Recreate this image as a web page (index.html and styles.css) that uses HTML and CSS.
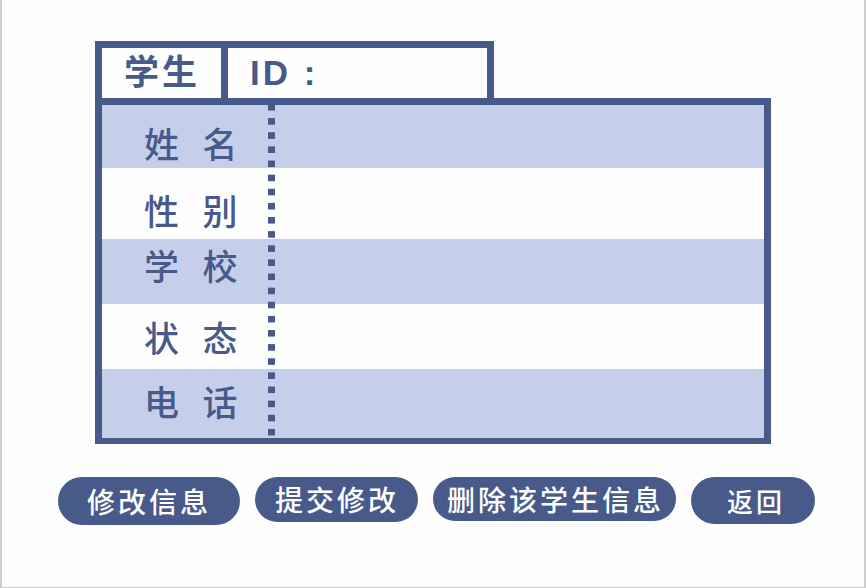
FILE: index.html
```html
<!DOCTYPE html>
<html lang="zh-CN">
<head>
<meta charset="utf-8">
<meta name="viewport" content="width=device-width, initial-scale=1">
<title>学生</title>
<link rel="stylesheet" href="styles.css">
</head>
<body>
<form class="page">
  <main class="record">
    <header class="tab">
      <h1 class="tab-title">学生</h1>
      <div class="tab-id">
        <label for="student-id">ID :</label>
        <input id="student-id" type="text">
      </div>
    </header>
    <div class="fields">
      <div class="row row-name"><label for="name">姓&ensp;名</label><input id="name" type="text"></div>
      <div class="row row-gender"><label for="gender">性&ensp;别</label><input id="gender" type="text"></div>
      <div class="row row-school"><label for="school">学&ensp;校</label><input id="school" type="text"></div>
      <div class="row row-status"><label for="status">状&ensp;态</label><input id="status" type="text"></div>
      <div class="row row-phone"><label for="phone">电&ensp;话</label><input id="phone" type="tel"></div>
    </div>
  </main>
  <div class="actions">
    <button class="edit" type="button">修改信息</button>
    <button class="submit" type="button">提交修改</button>
    <button class="delete" type="button">删除该学生信息</button>
    <button class="back" type="button">返回</button>
  </div>
</form>
</body>
</html>
```

FILE: styles.css
```css
:root {
  --ink: #485a8a;
  --band: #c6cfea;
  --line: 7px;
}

* { box-sizing: border-box; }

body {
  margin: 0;
  background: #fefefe;
  color: var(--ink);
  font-family: "Noto Sans CJK SC", sans-serif;
}

.page {
  min-height: 100vh;
  padding-top: 41px;
  border: solid #cdcdcd;
  border-width: 0 2px 1px;
}

.record { margin: 0 93px; }

.tab {
  display: flex;
  width: 59%;
  height: 57px;
  border: var(--line) solid var(--ink);
  border-bottom: 0;
  font-size: 35px;
  line-height: 44px;
  letter-spacing: 3px;
}

.tab-title {
  flex: none;
  width: 126px;
  margin: 0;
  padding-left: 22px;
  border-right: var(--line) solid var(--ink);
  font-size: 35px;
  font-weight: 700;
}

.tab-id {
  display: flex;
  flex: 1;
  min-width: 0;
  padding-left: 22px;
  font-family: "Liberation Sans", sans-serif;
  font-weight: 700;
  line-height: 50px;
}

.tab-id label { flex: none; }

input {
  flex: 1;
  min-width: 0;
  padding: 0 16px;
  border: 0;
  outline: 0;
  background: transparent;
  color: inherit;
  font: inherit;
}

.fields {
  position: relative;
  border: var(--line) solid var(--ink);
  border-bottom-width: 6px;
}

/* Dotted divider between labels and values */
.fields::before {
  content: "";
  position: absolute;
  top: -1px;
  bottom: 0;
  left: 166px;
  width: 7px;
  background: linear-gradient(var(--ink) 50%, transparent 50%) 0 0 / 100% 4.23%;
}

.row {
  display: flex;
  align-items: center;
  height: 65px;
  font-size: 35px;
  font-weight: 500;
  line-height: 44px;
  letter-spacing: 3px;
}

.row:nth-child(odd) { background: var(--band); }

.row label {
  flex: none;
  width: 173px;
  padding-left: 42px;
}

.row-name { height: 63px; padding-top: 12px; }
.row-gender { height: 71px; padding-top: 12px; }
.row-school { padding-bottom: 14px; }
.row-status { padding-bottom: 0; }
.row-phone { height: 69px; padding-bottom: 6px; }

.actions {
  display: flex;
  align-items: flex-start;
  gap: 15px;
  padding: 33px 0 32px 56px;
}

button {
  flex: none;
  height: 45px;
  border: 0;
  border-radius: 24px;
  background: var(--ink);
  color: #fff;
  font: 500 28px/40px "Noto Sans CJK SC", sans-serif;
  letter-spacing: 3px;
}

.edit { height: 48px; padding: 0 29px; }
.submit { padding: 0 19px 2px 20px; }
.delete { height: 44px; padding: 0 12px 0 14px; }
.back { height: 47px; padding: 0 30px 0 36px; font-size: 26px; }
```
